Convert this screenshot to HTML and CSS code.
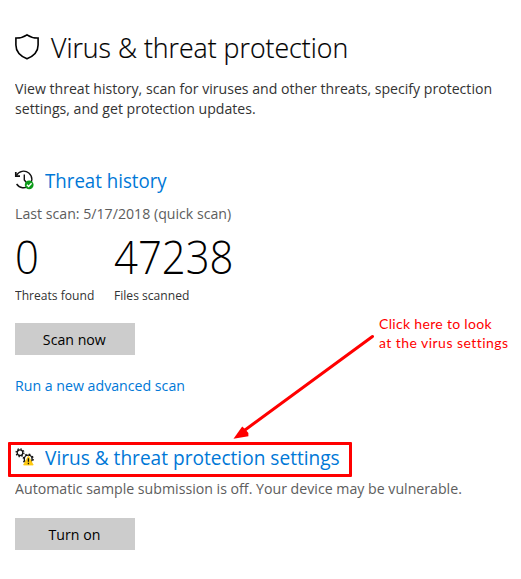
FILE: index.html
```
<!DOCTYPE html>
<html lang="en">
<head>
<meta charset="utf-8">
<title>Virus &amp; threat protection</title>
<link rel="stylesheet" href="styles.css">
</head>
<body>
<main class="page">
  <header class="title-row">
    <svg class="shield" width="26" height="28" viewBox="0 0 26 28"><path d="M13 1.8C16.2 4 20 5.1 24.1 5V12C24.1 18.5 19.3 23.2 13 25.8C6.7 23.2 1.9 18.5 1.9 12V5C6 5.1 9.8 4 13 1.8Z" fill="none" stroke="#000" stroke-width="1.6"/></svg>
    <h1><span class="fit title">Virus &amp; threat protection</span></h1>
  </header>
  <p class="intro"><span class="fit">View threat history, scan for viruses and other threats, specify protection</span><br><span class="fit">settings, and get protection updates.</span></p>

  <section class="history">
    <h2><svg width="20" height="20" viewBox="0 0 20 20"><path d="M2.4 5.3A8.3 8.3 0 1 1 2.6 14M10.3 4.5V10L13 13.2" fill="none" stroke="#111" stroke-width="1.4"/><path d="M1.8 2V6.2H6" fill="none" stroke="#111" stroke-width="1.7"/><circle cx="15.2" cy="14.8" r="4.4" fill="#0b9a18"/><path d="M12.9 14.7L14.6 16.4L17.6 13.3" fill="none" stroke="#fff" stroke-width="1.4"/></svg><a class="fit history-link">Threat history</a></h2>
    <p class="sub"><span class="fit">Last scan: 5/17/2018 (quick scan)</span></p>
    <div class="stats">
      <div class="stat"><div class="number"><span class="fit">0</span></div><div class="label"><span class="fit">Threats found</span></div></div>
      <div class="stat"><div class="number"><span class="fit">47238</span></div><div class="label"><span class="fit">Files scanned</span></div></div>
    </div>
    <button class="scan"><span class="fit">Scan now</span></button>
    <p class="advanced"><a class="fit">Run a new advanced scan</a></p>
  </section>

  <section class="settings">
    <h2><svg width="20" height="20" viewBox="0 0 20 20"><circle cx="6" cy="5.7" r="2.8" fill="none" stroke="#111" stroke-width="1.3"/><circle cx="6" cy="5.7" r="3.9" fill="none" stroke="#111" stroke-width="1.3" stroke-dasharray="1.4 1.66"/><circle cx="14.2" cy="12" r="3.9" fill="none" stroke="#111" stroke-width="1.4"/><circle cx="14.2" cy="12" r="4.9" fill="none" stroke="#111" stroke-width="1.4" stroke-dasharray="1.7 2.15"/><path d="M14.4 9L19.2 18H9.6Z" fill="#ffc90e" stroke="#ffc90e" stroke-width=".8" stroke-linejoin="round"/><path d="M14.4 11.2V14.8M14.4 15.8V17.2" stroke="#111" stroke-width="1.3"/></svg><a class="fit settings-link">Virus &amp; threat protection settings</a></h2>
    <p class="sub"><span class="fit">Automatic sample submission is off. Your device may be vulnerable.</span></p>
    <button class="turn"><span class="fit">Turn on</span></button>
  </section>
</main>
<div class="highlight"></div>
<svg class="arrow" width="521" height="579" viewBox="0 0 521 579"><path d="M372.5 336.5L245 430" stroke="#f00" stroke-width="3" stroke-linecap="round"/><path d="M233.5 438.7L242.2 426.5L245 429L248.4 433V436.3Z" fill="#f00"/></svg>
<p class="note"><span class="note-a">Click here to look</span><br><span class="note-b">at the virus settings</span></p>
</body>
</html>
```
FILE: styles.css
```
* { box-sizing: border-box; }
body { margin: 0; background: #fff; font: 15px/20px "Open Sans", "Noto Sans", sans-serif; color: #333; white-space: nowrap; overflow: hidden; }
h1, h2, p { margin: 0; font-weight: 400; }
.page { height: 579px; padding: 29px 15px 0; }
.fit { display: inline-block; transform: scaleX(.944); transform-origin: left center; }
.title-row { display: flex; align-items: center; height: 36px; }
.shield { flex: none; margin: 0 11px 0 -1px; }
h1 { font-size: 28px; line-height: 36px; font-weight: 300; color: #000; }
.title { transform: scaleX(.953); -webkit-text-stroke: .2px #000; }
.intro { margin-top: 13px; }
.intro .fit { transform: scaleX(.94); }
.history { margin-top: 48px; }
h2 { display: flex; align-items: center; gap: 11px; height: 28px; font-size: 20px; line-height: 28px; margin-left: -1px; }
h2 svg { flex: none; }
h2 a { padding-top: 2px; }
a { color: #0078d7; }
.history-link { transform: scaleX(.934); }
.settings-link { transform: scaleX(.954); }
.sub { margin-top: 9px; color: #5d5d5d; }
.stats { display: flex; margin-top: 9px; }
.stat { width: 99px; }
.number { height: 48px; font-size: 46px; line-height: 48px; font-weight: 300; color: #000; }
.number .fit { transform: scaleX(.91); }
.label { margin-top: 6px; font-size: 13px; line-height: 18px; }
.label .fit { transform: scaleX(.93); }
button { display: block; width: 120px; height: 32px; padding: 0; border: 0; background: #ccc; color: #000; font: 15px/32px "Open Sans", "Noto Sans", sans-serif; }
button .fit { transform: translateX(-1px) scaleX(.944); transform-origin: center; }
.scan { margin-top: 19px; }
.advanced { margin-top: 20px; }
.settings { margin-top: 48px; }
.settings .sub { margin-top: 7px; }
.turn { margin-top: 20px; }
.highlight { position: absolute; left: 8px; top: 442px; width: 344px; height: 35px; border: 3px solid #f00; border-radius: 1px; }
.arrow { position: absolute; left: 0; top: 0; }
.note { position: absolute; left: 379px; top: 314px; color: #f00; font: 14px/19px Lato, sans-serif; }
.note-a { letter-spacing: .32px; }
.note-b { letter-spacing: .45px; }
```
